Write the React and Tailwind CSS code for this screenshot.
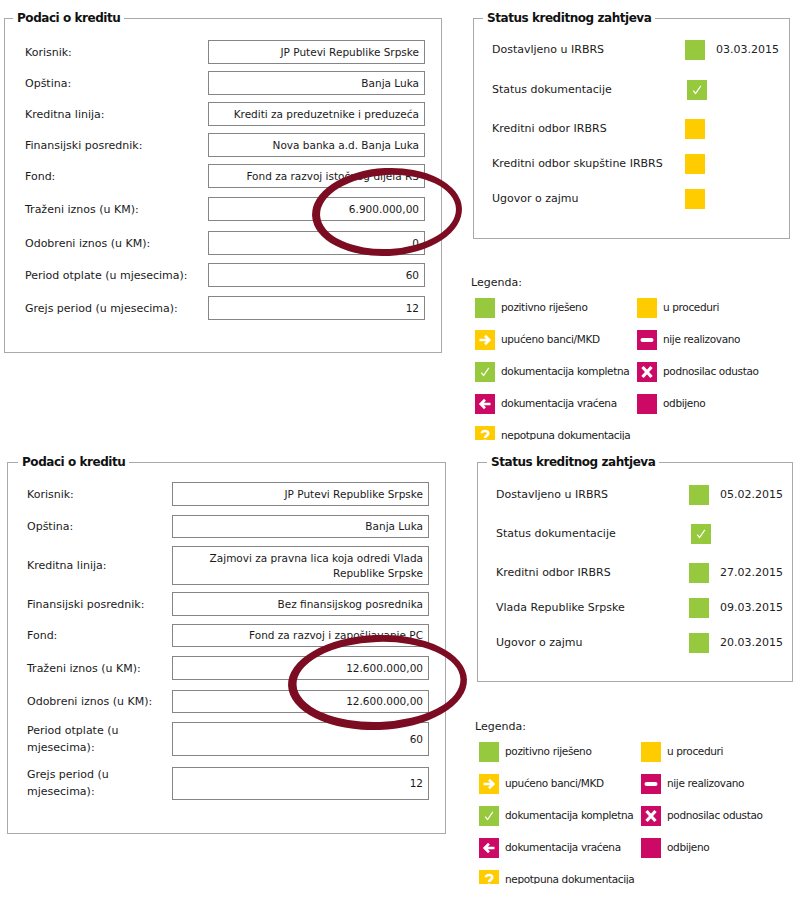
const font = "font-['DejaVu_Sans','Liberation_Sans',sans-serif]"

const green = 'bg-[#96c93d]'
const yellow = 'bg-[#ffcc00]'
const pink = 'bg-[#cc0a66]'

const topCredit = [
  { label: 'Korisnik:', value: 'JP Putevi Republike Srpske', mt: '', h: 'h-[24px]' },
  { label: 'Opština:', value: 'Banja Luka', mt: 'mt-[7px]', h: 'h-[24px]' },
  { label: 'Kreditna linija:', value: 'Krediti za preduzetnike i preduzeća', mt: 'mt-[7px]', h: 'h-[24px]' },
  { label: 'Finansijski posrednik:', value: 'Nova banka a.d. Banja Luka', mt: 'mt-[7px]', h: 'h-[24px]' },
  { label: 'Fond:', value: 'Fond za razvoj istočnog dijela RS', mt: 'mt-[7px]', h: 'h-[24px]' },
  { label: 'Traženi iznos (u KM):', value: '6.900.000,00', mt: 'mt-[9px]', h: 'h-[24px]' },
  { label: 'Odobreni iznos (u KM):', value: '0', mt: 'mt-[10px]', h: 'h-[24px]' },
  { label: 'Period otplate (u mjesecima):', value: '60', mt: 'mt-[8px]', h: 'h-[24px]' },
  { label: 'Grejs period (u mjesecima):', value: '12', mt: 'mt-[9px]', h: 'h-[24px]' },
]

const bottomCredit = [
  { label: 'Korisnik:', value: 'JP Putevi Republike Srpske', mt: '', h: 'h-[24px]' },
  { label: 'Opština:', value: 'Banja Luka', mt: 'mt-[9px]', h: 'h-[23px]' },
  { label: 'Kreditna linija:', value: 'Zajmovi za pravna lica koja odredi Vlada Republike Srpske', mt: 'mt-[8px]', h: 'h-[39px]' },
  { label: 'Finansijski posrednik:', value: 'Bez finansijskog posrednika', mt: 'mt-[7px]', h: 'h-[24px]' },
  { label: 'Fond:', value: 'Fond za razvoj i zapošljavanje РС', mt: 'mt-[8px]', h: 'h-[23px]' },
  { label: 'Traženi iznos (u KM):', value: '12.600.000,00', mt: 'mt-[9px]', h: 'h-[24px]' },
  { label: 'Odobreni iznos (u KM):', value: '12.600.000,00', mt: 'mt-[10px]', h: 'h-[23px]' },
  { label: 'Period otplate (u mjesecima):', value: '60', mt: 'mt-[9px]', h: 'h-[34px]' },
  { label: 'Grejs period (u mjesecima):', value: '12', mt: 'mt-[10px]', h: 'h-[33px]' },
]

const topStatus = [
  { label: 'Dostavljeno u IRBRS', kind: 'green', date: '03.03.2015', mt: '' },
  { label: 'Status dokumentacije', kind: 'check', mt: 'mt-[20px]' },
  { label: 'Kreditni odbor IRBRS', kind: 'yellow', mt: 'mt-[19px]' },
  { label: 'Kreditni odbor skupštine IRBRS', kind: 'yellow', mt: 'mt-[15px]' },
  { label: 'Ugovor o zajmu', kind: 'yellow', mt: 'mt-[15px]' },
]

const bottomStatus = [
  { label: 'Dostavljeno u IRBRS', kind: 'green', date: '05.02.2015', mt: '' },
  { label: 'Status dokumentacije', kind: 'check', mt: 'mt-[19px]' },
  { label: 'Kreditni odbor IRBRS', kind: 'green', date: '27.02.2015', mt: 'mt-[19px]' },
  { label: 'Vlada Republike Srpske', kind: 'green', date: '09.03.2015', mt: 'mt-[15px]' },
  { label: 'Ugovor o zajmu', kind: 'green', date: '20.03.2015', mt: 'mt-[15px]' },
]

const legendItems = [
  { kind: 'green', text: 'pozitivno riješeno' },
  { kind: 'yellow', text: 'u proceduri' },
  { kind: 'right', text: 'upućeno banci/MKD' },
  { kind: 'minus', text: 'nije realizovano' },
  { kind: 'check', text: 'dokumentacija kompletna' },
  { kind: 'x', text: 'podnosilac odustao' },
  { kind: 'left', text: 'dokumentacija vraćena' },
  { kind: 'pink', text: 'odbijeno' },
  { kind: 'question', text: 'nepotpuna dokumentacija' },
]

function Icon({ kind }) {
  const bg =
    kind === 'green' || kind === 'check'
      ? green
      : kind === 'yellow' || kind === 'right' || kind === 'question'
        ? yellow
        : pink
  return (
    <div className={`w-[20px] h-[20px] shrink-0 ${bg} flex items-center justify-center`}>
      {kind === 'check' && (
        <svg width="20" height="20" viewBox="0 0 20 20">
          <path d="M6.2 10.6 L8.6 13.6 L13.8 5.8" fill="none" stroke="#fff" strokeWidth="1.2" />
        </svg>
      )}
      {kind === 'right' && (
        <svg width="20" height="20" viewBox="0 0 20 20">
          <path d="M4.5 10 H14 M10 5.8 L14.3 10 L10 14.2" fill="none" stroke="#fff" strokeWidth="2.6" />
        </svg>
      )}
      {kind === 'left' && (
        <svg width="20" height="20" viewBox="0 0 20 20">
          <path d="M15.5 10 H6 M10 5.8 L5.7 10 L10 14.2" fill="none" stroke="#fff" strokeWidth="2.6" />
        </svg>
      )}
      {kind === 'minus' && (
        <svg width="20" height="20" viewBox="0 0 20 20">
          <path d="M5.5 10 H14.5" fill="none" stroke="#fff" strokeWidth="4" strokeLinecap="round" />
        </svg>
      )}
      {kind === 'x' && (
        <svg width="20" height="20" viewBox="0 0 20 20">
          <path d="M5.5 5 L14.5 15 M14.5 5 L5.5 15" fill="none" stroke="#fff" strokeWidth="3.2" />
        </svg>
      )}
      {kind === 'question' && (
        <svg width="20" height="20" viewBox="0 0 20 20">
          <path d="M6.8 7.2 C6.8 4.4 13.2 4.2 13.2 7.4 C13.2 9.6 10 9.6 10 12" fill="none" stroke="#fff" strokeWidth="2.6" />
          <rect x="8.6" y="13.6" width="2.8" height="2.8" fill="#fff" />
        </svg>
      )}
    </div>
  )
}

function Box({ legend, legendMl, className, children }) {
  return (
    <fieldset className={`border border-[#a9a9a9] ${className}`}>
      <legend className={`${legendMl} px-[4px] text-[12px] leading-[16px] font-bold tracking-[-0.45px] text-[#111]`}>
        {legend}
      </legend>
      {children}
    </fieldset>
  )
}

function CreditRows({ rows, labelW, inputW }) {
  return rows.map((r) => (
    <div key={r.label} className={`flex items-center ${r.mt}`}>
      <div className={`${labelW} pr-[4px] leading-[17px]`}>{r.label}</div>
      <div
        className={`${inputW} ${r.h} border border-[#858585] flex items-center justify-end px-[5px] text-[10.5px] leading-[15px] text-right overflow-hidden`}
      >
        <span>{r.value}</span>
      </div>
    </div>
  ))
}

function StatusRows({ rows }) {
  return rows.map((r) => (
    <div key={r.label} className={`flex items-center h-[20px] ${r.mt}`}>
      <div className="w-[193px]">{r.label}</div>
      <div className={r.kind === 'check' ? 'ml-[2px]' : ''}>
        <Icon kind={r.kind} />
      </div>
      {r.date && <div className="ml-[11px] text-[#222]">{r.date}</div>}
    </div>
  ))
}

function Legend({ className }) {
  return (
    <div className={className}>
      <div className="leading-[14px]">Legenda:</div>
      <div className="ml-[4px] mt-[8px] grid grid-cols-[162px_1fr] gap-y-[12px]">
        {legendItems.map((it) => (
          <div
            key={it.text}
            className="flex items-center gap-[6px] h-[20px] whitespace-nowrap text-[10.5px] tracking-[-0.35px]"
          >
            <Icon kind={it.kind} />
            <span>{it.text}</span>
          </div>
        ))}
      </div>
    </div>
  )
}

function Ring({ outer, inner, rot }) {
  const ring = (c) =>
    `M${c.cx - c.rx} ${c.cy} a${c.rx} ${c.ry} 0 1 0 ${2 * c.rx} 0 a${c.rx} ${c.ry} 0 1 0 ${-2 * c.rx} 0 Z`
  return (
    <svg className="absolute left-0 top-0 pointer-events-none" width="801" height="445">
      <path
        d={`${ring(outer)} ${ring(inner)}`}
        fillRule="evenodd"
        fill="#7b0c22"
        transform={`rotate(${rot} ${outer.cx} ${outer.cy})`}
      />
    </svg>
  )
}

export default function App() {
  return (
    <div className={`w-[801px] h-[907px] bg-white text-[11px] text-[#1a1a1a] ${font}`}>
      <section className="relative h-[440px] overflow-hidden flex items-start">
        <Box legend="Podaci o kreditu" legendMl="ml-[8px]" className="ml-[4px] mt-[10px] w-[438px]">
          <div className="pl-[20px] pt-[14px] pb-[32px]">
            <CreditRows rows={topCredit} labelW="w-[183px]" inputW="w-[217px]" />
          </div>
        </Box>
        <div className="ml-[31px] mt-[10px] w-[317px]">
          <Box legend="Status kreditnog zahtjeva" legendMl="ml-[9px]" className="w-[317px]">
            <div className="pl-[18px] pt-[14px] pb-[29px]">
              <StatusRows rows={topStatus} />
            </div>
          </Box>
          <Legend className="ml-[-2px] mt-[37px]" />
        </div>
        <Ring outer={{ cx: 387, cy: 212, rx: 75, ry: 44 }} inner={{ cx: 388, cy: 212, rx: 68, ry: 37 }} rot={-3} />
      </section>

      <section className="relative h-[444px] overflow-hidden flex items-start">
        <Box legend="Podaci o kreditu" legendMl="ml-[10px]" className="ml-[7px] mt-[14px] w-[439px]">
          <div className="pl-[19px] pt-[12px] pb-[33px]">
            <CreditRows rows={bottomCredit} labelW="w-[145px]" inputW="w-[257px]" />
          </div>
        </Box>
        <div className="ml-[31px] mt-[14px] w-[316px]">
          <Box legend="Status kreditnog zahtjeva" legendMl="ml-[9px]" className="w-[316px]">
            <div className="pl-[18px] pt-[15px] pb-[28px]">
              <StatusRows rows={bottomStatus} />
            </div>
          </Box>
          <Legend className="ml-[-2px] mt-[38px]" />
        </div>
        <Ring outer={{ cx: 377.5, cy: 242.5, rx: 89.5, ry: 47.5 }} inner={{ cx: 378.5, cy: 242, rx: 82, ry: 40 }} rot={-2} />
      </section>
    </div>
  )
}
